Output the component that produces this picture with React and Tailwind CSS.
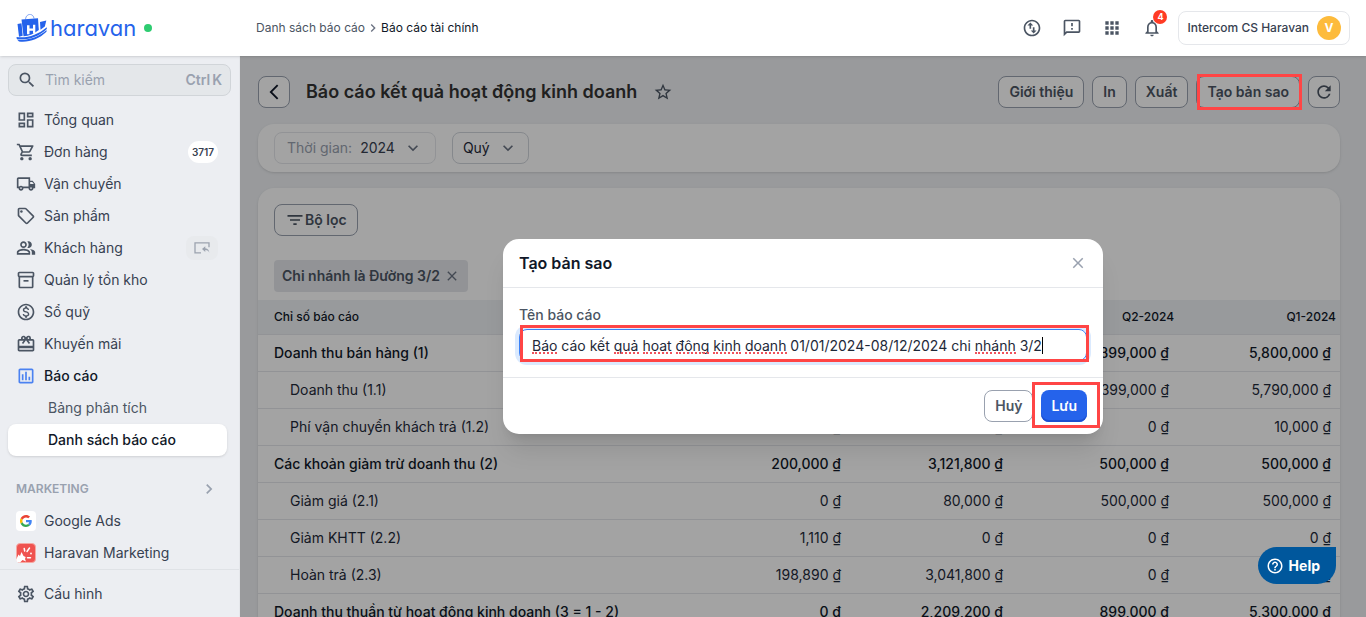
import { useState } from 'react'
import {
  MdSearch, MdOutlineDashboard, MdOutlineShoppingCart, MdOutlineLocalShipping,
  MdOutlineSell, MdOutlinePeopleAlt, MdOutlineInventory2, MdOutlineMonetizationOn,
  MdOutlineCardGiftcard, MdOutlineAssessment, MdOutlineSettings, MdChevronRight,
  MdOutlineSwapVerticalCircle, MdOutlineFeedback, MdApps, MdOutlineNotifications,
  MdStarOutline, MdRefresh, MdFilterList, MdClose, MdKeyboardArrowDown,
  MdArrowBackIosNew, MdHelpOutline,
} from 'react-icons/md'

const MENU = [
  { label: 'Tổng quan', icon: MdOutlineDashboard },
  { label: 'Đơn hàng', icon: MdOutlineShoppingCart, count: '3717' },
  { label: 'Vận chuyển', icon: MdOutlineLocalShipping },
  { label: 'Sản phẩm', icon: MdOutlineSell },
  { label: 'Khách hàng', icon: MdOutlinePeopleAlt, popout: true },
  { label: 'Quản lý tồn kho', icon: MdOutlineInventory2 },
  { label: 'Sổ quỹ', icon: MdOutlineMonetizationOn },
  { label: 'Khuyến mãi', icon: MdOutlineCardGiftcard },
  { label: 'Báo cáo', icon: MdOutlineAssessment, active: true },
]

const QUARTERS = ['Q4-2024', 'Q3-2024', 'Q2-2024', 'Q1-2024']

const ROWS = [
  { name: 'Doanh thu bán hàng (1)', bold: true, values: ['200,000', '5,331,000', '1,399,000', '5,800,000'] },
  { name: 'Doanh thu (1.1)', values: ['200,000', '5,331,000', '1,399,000', '5,790,000'] },
  { name: 'Phí vận chuyển khách trả (1.2)', values: ['0', '0', '0', '10,000'] },
  { name: 'Các khoản giảm trừ doanh thu (2)', bold: true, values: ['200,000', '3,121,800', '500,000', '500,000'] },
  { name: 'Giảm giá (2.1)', values: ['0', '80,000', '500,000', '500,000'] },
  { name: 'Giảm KHTT (2.2)', values: ['1,110', '0', '0', '0'] },
  { name: 'Hoàn trả (2.3)', values: ['198,890', '3,041,800', '0', '0'] },
  { name: 'Doanh thu thuần từ hoạt động kinh doanh (3 = 1 - 2)', bold: true, values: ['0', '2,209,200', '899,000', '5,300,000'] },
]

// spell check marks under the report name, from the left edge of the input
const SPELL_MARKS = [
  { left: 13, width: 25 },
  { left: 95, width: 25 },
  { left: 124, width: 29 },
  { left: 157, width: 33 },
  { left: 194, width: 28 },
  { left: 226, width: 42 },
  { left: 456, width: 41 },
]

function Logo() {
  return (
    <a href="#" className="flex items-center" aria-label="haravan">
      <svg width="32" height="29" viewBox="0 0 32 29" aria-hidden="true">
        <path d="M9.500 5.500C10-1.200 17.500-1 18 4.500" fill="none" stroke="#7ea2f3" strokeWidth="1" />
        <path d="M1.500 10l4-.8 1.200 12.500-3.700 1z" fill="#2563eb" />
        <path d="M5.500 5.500L22 4.200l.8 11.800C18 20 13 21.800 7.500 22.300z" fill="#2563eb" />
        <path d="M24 8l6.300-1.500-1.500 6-4.300 3.300z" fill="#2563eb" />
        <path d="M11 11.300h2.500v3.200H17v-3.700h2.300v8.700H17v-2.700h-3.500v3.400H11z" fill="#fff" />
        <path d="M.5 23C11 24.500 21.500 21 30.800 13.200v1.800C22 23.500 11 26.500.8 25z" fill="#2563eb" />
        <path d="M1 25.500C12 27 22.500 23 30.500 16v1.800C22.500 25.500 13 28.500 3 27.500z" fill="#2563eb" />
      </svg>
      <span className="ml-0.5 text-[22px] leading-7 text-[#2563eb] [font-feature-settings:'cv11']">haravan</span>
      <span className="ml-2 size-2 rounded-full bg-[#2ecc71]" />
    </a>
  )
}

function TopBar() {
  return (
    <header className="relative z-30 flex h-14 shrink-0 items-center bg-white pr-4 shadow">
      <div className="w-60 shrink-0 pl-4"><Logo /></div>
      <nav className="flex items-center pl-4 text-xs">
        <a href="#" className="text-[#4b5563]">Danh sách báo cáo</a>
        <MdChevronRight className="size-4 text-gray-500" />
        <a href="#" className="text-gray-900">Báo cáo tài chính</a>
      </nav>
      <div className="ml-auto flex items-center gap-5 text-[#4b5563]">
        <button aria-label="Chuyển đổi"><MdOutlineSwapVerticalCircle className="size-5" /></button>
        <button aria-label="Góp ý"><MdOutlineFeedback className="size-5" /></button>
        <button aria-label="Ứng dụng"><MdApps className="size-5" /></button>
        <button aria-label="Thông báo" className="relative">
          <MdOutlineNotifications className="size-5" />
          <span className="absolute -right-[5px] -top-2 flex size-[14px] items-center justify-center rounded-full bg-[#ff3b24] text-[9px] font-bold text-white">4</span>
        </button>
        <button className="-ml-1 flex h-[34px] items-center gap-2 rounded-lg border border-gray-200 px-2 text-xs font-medium text-[#374151]">
          Intercom CS Haravan
          <span className="flex size-6 items-center justify-center rounded-full bg-[#fdbb3c] text-xs font-bold text-white">V</span>
        </button>
      </div>
    </header>
  )
}

function Sidebar() {
  return (
    <aside className="flex w-60 shrink-0 flex-col border-r border-[#e5e7eb] bg-[#eceef2] text-sm text-[#374151]">
      <label className="mx-2 mt-2 flex h-8 shrink-0 items-center rounded-lg border border-[#d1d5d9] bg-[#e4e7ea] px-2">
        <MdSearch className="size-5 shrink-0 text-[#4b5563]" />
        <input aria-label="Tìm kiếm" placeholder="Tìm kiếm" className="ml-2 w-full min-w-0 bg-transparent outline-none placeholder:text-gray-400" />
        <kbd className="flex shrink-0 gap-0.5 font-['Inter',sans-serif] font-semibold text-gray-400"><span>Ctrl</span><span>K</span></kbd>
      </label>

      <nav className="mt-2 flex flex-col">
        {MENU.map(({ label, icon: Icon, count, popout, active }) => (
          <a key={label} href="#" className={`flex h-8 items-center pl-4 pr-[21px] ${active ? 'font-medium text-gray-900' : ''}`}>
            <Icon className={`mr-2 size-5 ${active ? 'text-[#4b82f1]' : 'text-[#4b5563]'}`} />
            {label}
            {count && (
              <span className="ml-auto flex h-[22px] items-center rounded-full bg-white px-1 text-[10px] font-semibold">{count}</span>
            )}
            {popout && (
              <span className="ml-auto flex h-6 w-8 items-center justify-center rounded-lg bg-[#e8eaed]">
                <svg width="16" height="12" viewBox="0 0 16 12" fill="none" stroke="#9ca3af" strokeWidth="1.300">
                  <path d="M7 10.800H1V.8h14v4.500" />
                  <path d="M15.300 11c-.6-2.200-2-3-4-3V10L8 7l3.300-2.800v2c2.700.2 4 2 4 4.800z" fill="#9ca3af" stroke="none" />
                </svg>
              </span>
            )}
          </a>
        ))}
        <a href="#" className="flex h-8 items-center pl-12 text-[#4b5563]">Bảng phân tích</a>
        <a href="#" className="ml-2 mr-3 flex h-8 items-center rounded-lg bg-white pl-10 font-medium text-gray-900 shadow-sm">Danh sách báo cáo</a>
      </nav>

      <div className="mt-4 flex h-[34px] items-center justify-between pl-4 pr-5 text-xs font-semibold text-gray-400">
        MARKETING
        <MdChevronRight className="size-5" />
      </div>
      <a href="#" className="flex h-8 shrink-0 items-center pl-4">
        <span className="mr-2 flex size-5 items-center justify-center rounded bg-white">
          <svg width="12" height="12" viewBox="0 0 48 48">
            <path fill="#EA4335" d="M24 9.500c3.500 0 6.700 1.200 9.200 3.600l6.900-6.900C35.900 2.400 30.500 0 24 0 14.600 0 6.500 5.400 2.600 13.200l8 6.200C12.400 13.700 17.700 9.500 24 9.500z" />
            <path fill="#4285F4" d="M47 24.600c0-1.600-.2-3.100-.4-4.600H24v9h12.900c-.6 3-2.200 5.500-4.700 7.200l7.700 6C44.400 38 47 31.800 47 24.600z" />
            <path fill="#FBBC05" d="M10.500 28.600a14.500 14.500 0 010-9.200l-8-6.200a24 24 0 000 21.600l8-6.200z" />
            <path fill="#34A853" d="M24 48c6.500 0 11.900-2.100 15.900-5.800l-7.700-6c-2.200 1.500-4.900 2.300-8.200 2.300-6.300 0-11.600-4.200-13.500-9.900l-8 6.200C6.500 42.600 14.600 48 24 48z" />
          </svg>
        </span>
        Google Ads
      </a>
      <a href="#" className="flex h-8 shrink-0 items-center pl-4">
        <svg className="mr-2" width="20" height="20" viewBox="0 0 20 20">
          <rect x=".5" y=".5" width="19" height="19" rx="3.500" fill="#ef5350" stroke="#f5a9a3" />
          <path d="M0 17l2.500-5.500L4 13l1.500-4 2 4 2.200 1-.7 2 1 2.500-3.500-1.500L4 19.500 1 19z" fill="#fff" />
          <path d="M8.200 5.500l.5 2.500M13.500 5L11 8.500M11.500 14.800h3" stroke="#fff" strokeWidth="1.500" strokeLinecap="round" />
          <circle cx="15" cy="10.500" r=".9" fill="#fff" />
        </svg>
        Haravan Marketing
      </a>
      <a href="#" className="mt-auto flex h-12 shrink-0 items-center border-t border-[#dfe2e6] pl-4">
        <MdOutlineSettings className="mr-2 size-5 text-[#4b5563]" />
        Cấu hình
      </a>
    </aside>
  )
}

function ToolButton({ children, className = 'px-[10px]', ...rest }) {
  return (
    <button {...rest} className={`flex h-8 items-center justify-center rounded-lg border border-gray-400 bg-white text-sm font-semibold text-[#4b5563] ${className}`}>
      {children}
    </button>
  )
}

function ReportTable() {
  return (
    <table className="w-full table-fixed border-collapse text-sm text-gray-800">
      <colgroup>
        <col />
        <col className="w-[162px]" />
        <col className="w-[162px]" />
        <col className="w-[166px]" />
        <col className="w-[162px]" />
      </colgroup>
      <thead>
        <tr className="h-[34px] border-b border-gray-200 bg-[#eef1f4] text-xs text-gray-900">
          <th className="pl-4 text-left font-medium">Chỉ số báo cáo</th>
          {QUARTERS.map((q) => <th key={q} className="pr-1 text-right font-medium">{q}</th>)}
        </tr>
      </thead>
      <tbody>
        {ROWS.map((row) => (
          <tr key={row.name} className={`h-[37px] border-b border-gray-200 ${row.bold ? 'font-medium text-gray-900' : ''}`}>
            <td className={`whitespace-nowrap ${row.bold ? 'pl-4' : 'pl-8'}`}>{row.name}</td>
            {row.values.map((v, i) => <td key={i} className="pr-[9px] text-right">{v} ₫</td>)}
          </tr>
        ))}
      </tbody>
    </table>
  )
}

function Report() {
  return (
    <main className="min-w-0 flex-1 overflow-hidden bg-[#eff1f4] pl-[18px] pr-[26px] pt-5">
      <div className="flex items-center gap-2">
        <button aria-label="Quay lại" className="flex size-8 items-center justify-center rounded-lg border border-gray-400 bg-white text-gray-900">
          <MdArrowBackIosNew className="size-[18px]" />
        </button>
        <h1 className="ml-2 text-lg font-semibold text-[#333]">Báo cáo kết quả hoạt động kinh doanh</h1>
        <button aria-label="Yêu thích" className="ml-2 text-[#4b5563]"><MdStarOutline className="size-5" /></button>
        <div className="ml-auto flex gap-2">
          <ToolButton>Giới thiệu</ToolButton>
          <ToolButton>In</ToolButton>
          <ToolButton>Xuất</ToolButton>
          <div className="relative">
            <ToolButton>Tạo bản sao</ToolButton>
            <span className="pointer-events-none absolute -bottom-0.5 -right-0.5 -top-0.5 left-px z-20 border-3 border-[#ff4545]" />
          </div>
          <ToolButton aria-label="Tải lại" className="w-8"><MdRefresh className="size-5" /></ToolButton>
        </div>
      </div>

      <section className="mt-4 flex h-12 items-start gap-4 rounded-2xl bg-white px-4 pt-2 text-sm shadow">
        <button className="flex h-8 items-center rounded-lg border border-gray-200 px-3 text-[#374151]">
          <span className="mr-2 text-gray-400">Thời gian:</span>2024
          <MdKeyboardArrowDown className="ml-2 size-5 text-gray-500" />
        </button>
        <button className="flex h-8 items-center rounded-lg border border-gray-300 px-[10px] text-gray-800">
          Quý<MdKeyboardArrowDown className="ml-2 size-5 text-gray-500" />
        </button>
      </section>

      <section className="mt-4 rounded-2xl bg-white pt-4 shadow">
        <div className="flex flex-col items-start gap-6 px-4 pb-2">
          <ToolButton className="px-[10px]"><MdFilterList className="size-5" />Bộ lọc</ToolButton>
          <span className="flex h-8 items-center rounded bg-gray-200 px-2 text-sm font-semibold text-[#4b5563]">
            Chi nhánh là Đường 3/2
            <button aria-label="Bỏ lọc" className="ml-1"><MdClose className="size-4 text-gray-500" /></button>
          </span>
        </div>
        <ReportTable />
      </section>
    </main>
  )
}

function CopyDialog() {
  const [name, setName] = useState('Báo cáo kết quả hoạt động kinh doanh 01/01/2024-08/12/2024 chi nhánh 3/2')

  return (
    <div role="dialog" aria-labelledby="copy-title" className="w-full max-w-[600px] rounded-2xl bg-white shadow-xl">
      <div className="flex h-[49px] items-center justify-between border-b border-gray-200 px-4">
        <h2 id="copy-title" className="text-base font-semibold text-gray-900">Tạo bản sao</h2>
        <button aria-label="Đóng"><MdClose className="size-[18px] text-gray-400" /></button>
      </div>
      <div className="border-b border-gray-200 px-4 pb-4 pt-[17px]">
        <label htmlFor="report-name" className="mb-1 block text-sm font-medium leading-5 text-[#4b5563]">Tên báo cáo</label>
        <div className="relative">
          <input
            id="report-name"
            value={name}
            spellCheck={false}
            onChange={(e) => setName(e.target.value)}
            className="block h-8 w-full rounded-lg border border-[#3b82f6] px-3 text-sm text-gray-800 outline-none ring-4 ring-blue-100"
          />
          {SPELL_MARKS.map((m) => (
            <span key={m.left} className="absolute top-[23px] border-b-2 border-dotted border-[#f0525c]" style={{ left: m.left, width: m.width }} />
          ))}
          <span className="absolute left-[523px] top-2 h-[17px] w-px bg-black" />
          <span className="pointer-events-none absolute -bottom-px -right-0.5 -top-1 left-px border-3 border-[#ff4545]" />
        </div>
      </div>
      <div className="flex justify-end gap-2 px-4 py-3">
        <ToolButton className="px-[10px]">Huỷ</ToolButton>
        <div className="relative">
          <button className="h-8 rounded-lg bg-[#2563eb] px-[10px] text-sm font-semibold text-white shadow-[inset_0_-2px_0_#1d4fd0]">Lưu</button>
          <span className="pointer-events-none absolute -bottom-1.5 -left-[9px] -right-[13px] -top-2 border-3 border-[#ff4545]" />
        </div>
      </div>
    </div>
  )
}

export default function App() {
  return (
    <div className="flex h-screen flex-col overflow-hidden font-['Inter','Noto_Sans',sans-serif]">
      <TopBar />
      <div className="relative flex min-h-0 flex-1">
        <Sidebar />
        <Report />
        <div className="absolute inset-y-0 left-60 right-0 z-10 flex items-center justify-center bg-black/36">
          <CopyDialog />
        </div>
        <button className="absolute bottom-[33px] right-[30px] z-20 flex h-[37px] items-center gap-1 rounded-full rounded-tr-md bg-[#00579c] pl-2 pr-4 text-sm font-bold text-white">
          <MdHelpOutline className="mr-px size-[18px]" />Help
        </button>
      </div>
    </div>
  )
}
